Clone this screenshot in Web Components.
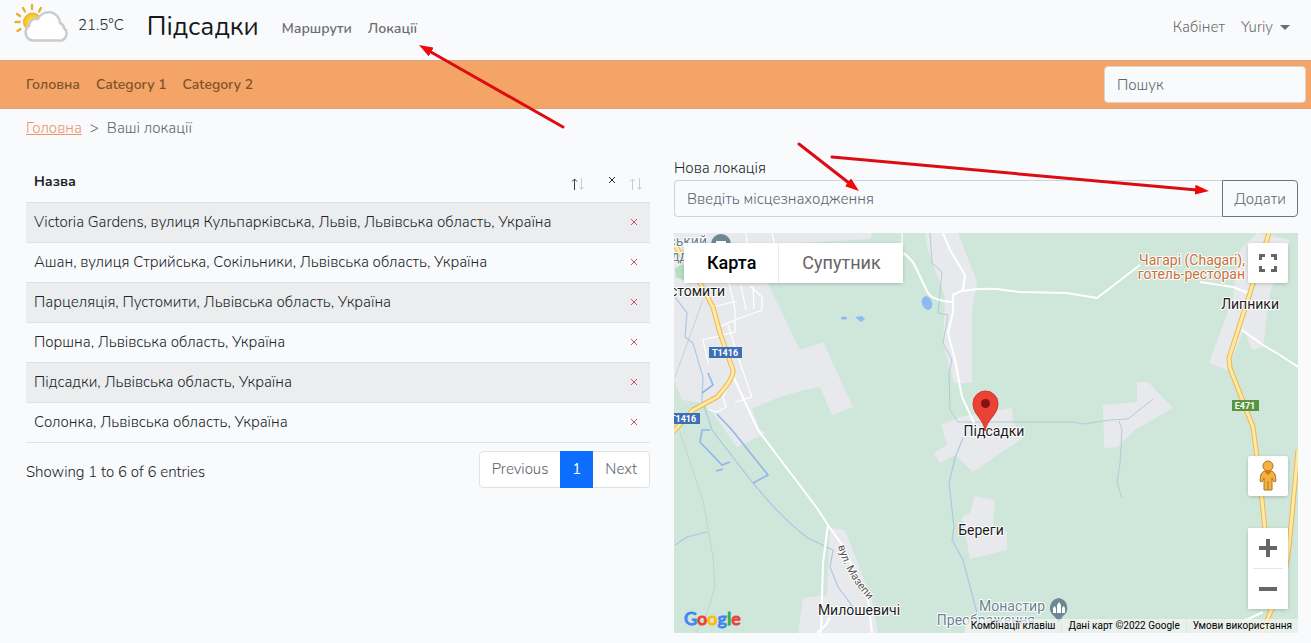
<!DOCTYPE html>
<html lang="uk">
<head>
<meta charset="utf-8">
<meta name="viewport" content="width=device-width, initial-scale=1">
<title>Підсадки – Ваші локації</title>
<style>
  body {
    margin: 0;
    background: #f8fafc;
    color: #212529;
    font: 300 15px/22px Nunito, "Open Sans", "Noto Sans", sans-serif;
    --muted: #6c6d6f;
    --accent: #f4a466;
    --line: #dee2e6;
  }
</style>
</head>
<body>
<locations-page></locations-page>

<script>
const define = (name, html, setup) => {
  const template = document.createElement('template');
  template.innerHTML = html;
  customElements.define(name, class extends HTMLElement {
    constructor() {
      super();
      this.attachShadow({ mode: 'open' }).append(template.content.cloneNode(true));
    }
    connectedCallback() {
      if (setup && !this.ready) { this.ready = true; setup(this, this.shadowRoot); }
    }
  });
};

define('weather-badge', `
<style>
  :host { display: flex; align-items: center; gap: 8px; }
  svg { display: block; }
  span { padding-top: 2px; }
</style>
<svg width="58" height="42" viewBox="0 0 58 42" aria-hidden="true">
  <defs>
    <radialGradient id="sun"><stop offset="0" stop-color="#fff04a"/><stop offset="1" stop-color="#f5bd20"/></radialGradient>
  </defs>
  <g stroke="#e9ae35" stroke-width="2.4" stroke-linecap="round">
    <path d="M20 2v4M11 5l2 3.500M29 5l-2 3.500M5 11l3 2M3.500 19h4M5.500 28l3-2M34 10.500l-2 1.500"/>
  </g>
  <circle cx="20.500" cy="19" r="9" fill="url(#sun)" stroke="#e9ae35"/>
  <path d="M21 37.500a8 8 0 0 1-4-14.500 7 7 0 0 1 9-7 11.500 11.500 0 0 1 22 4 6 6 0 0 1 4 5 7.500 7.500 0 0 1-2 12.500z" fill="#fff" stroke="#cbcccd" stroke-width="2.500"/>
</svg>
<span><slot></slot></span>`);

define('nav-item', `
<style>
  :host { display: block; }
  a { color: inherit; text-decoration: none; display: flex; align-items: center; gap: 7px; }
  i { display: none; border: 5px solid transparent; border-top-color: currentColor; border-bottom: 0; }
  :host([menu]) i { display: block; }
</style>
<a href="#"><slot></slot><i></i></a>`);

define('site-header', `
<style>
  :host { display: flex; align-items: center; height: 60px; padding: 0 21px 0 12px; box-sizing: border-box; }
  weather-badge { align-self: flex-start; padding-top: 3px; }
  .brand { margin-left: 23px; font-size: 26px; line-height: 40px; font-weight: 400; color: #17191b; text-decoration: none; padding-bottom: 6px; }
  nav { display: flex; gap: 16px; color: var(--muted); padding-bottom: 4px; }
  .main { flex: 1; margin-left: 23px; font-size: 14px; font-weight: 600; padding-bottom: 2px; }
  .user { padding-bottom: 6px; }
</style>
<weather-badge>21.5°C</weather-badge>
<a class="brand" href="#">Підсадки</a>
<nav class="main"><nav-item>Маршрути</nav-item><nav-item>Локації</nav-item></nav>
<nav class="user"><nav-item>Кабінет</nav-item><nav-item menu>Yuriy</nav-item></nav>`);

define('category-bar', `
<style>
  :host { display: flex; align-items: center; justify-content: space-between; height: 49px; box-sizing: border-box; padding: 0 5px 0 26px; background: var(--accent); border: solid #d5a582; border-width: 1px 0; }
  nav { display: flex; gap: 16px; font-size: 14px; font-weight: 600; color: #7f532b; }
  input { width: 202px; height: 37px; box-sizing: border-box; padding: 0 12px; font: inherit; background: #f8fafc; border: 1px solid #dcd3cc; border-radius: 4px; }
  input::placeholder { color: #5d666e; }
</style>
<nav><nav-item>Головна</nav-item><nav-item>Category 1</nav-item><nav-item>Category 2</nav-item></nav>
<input type="search" placeholder="Пошук" aria-label="Пошук">`);

define('crumb-trail', `
<style>
  :host { display: flex; gap: 8px; padding: 8px 26px 7px; color: #5d666e; }
  a { color: #ee9468; }
</style>
<a href="#">Головна</a><span>&gt;</span><span><slot></slot></span>`);

define('sort-arrows', `
<style>
  :host { display: block; color: #c9cbcd; }
  svg { display: block; fill: none; stroke: currentColor; }
  :host([active]) .up { stroke: #3b3e41; }
</style>
<svg width="14" height="14" viewBox="0 0 14 14" aria-hidden="true">
  <path class="up" d="M4.500 13V2M2 4.500L4.500 2 7 4.500"/><path d="M11.500 1v11M9.500 10l2 2.500 2-2.500"/>
</svg>`);

define('location-table', `
<style>
  :host { display: block; }
  table { width: 100%; border-collapse: collapse; table-layout: fixed; }
  col:last-child { width: 58px; }
  th, td { box-sizing: border-box; height: 40px; padding: 0 8px; text-align: left; border-bottom: 1px solid var(--line); }
  th { height: 42px; padding-top: 2px; font-size: 14px; font-weight: 700; }
  th div { display: flex; justify-content: space-between; align-items: center; }
  th sort-arrows { padding-top: 4px; }
  th:last-child span { padding-left: 8px; }
  tbody tr:nth-child(odd) { background: #ebedee; }
  td:last-child { text-align: right; }
  button { width: 16px; height: 22px; padding: 0; border: 0; background: none; color: #c8565c; vertical-align: middle; }
  svg { display: inline-block; stroke: currentColor; fill: none; vertical-align: middle; margin-bottom: 4px; }
</style>
<table>
  <colgroup><col><col></colgroup>
  <thead><tr>
    <th><div>Назва<sort-arrows active></sort-arrows></div></th>
    <th><div><span><svg width="8" height="8" viewBox="0 0 8 8"><path d="M1 1l6 6M7 1L1 7"/></svg></span><sort-arrows></sort-arrows></div></th>
  </tr></thead>
  <tbody></tbody>
</table>`, (host, root) => {
  const names = [
    'Victoria Gardens, вулиця Кульпарківська, Львів, Львівська область, Україна',
    'Ашан, вулиця Стрийська, Сокільники, Львівська область, Україна',
    'Парцеляція, Пустомити, Львівська область, Україна',
    'Поршна, Львівська область, Україна',
    'Підсадки, Львівська область, Україна',
    'Солонка, Львівська область, Україна'
  ];
  root.querySelector('tbody').innerHTML = names.map(name => `<tr><td>${name}</td><td><button aria-label="Видалити"><svg width="8" height="8" viewBox="0 0 8 8"><path d="M1 1l6 6M7 1L1 7"/></svg></button></td></tr>`).join('');
});

define('table-pager', `
<style>
  :host { display: flex; justify-content: space-between; align-items: center; padding-top: 8px; }
  nav { display: flex; height: 37px; box-sizing: border-box; border: 1px solid var(--line); border-radius: 4px; background: #fff; }
  button { font: inherit; color: #5d666e; border: 0; background: none; padding: 0 12px; }
  .current { background: #0d6efd; color: #fff; font-weight: 400; margin: -1px 0; }
  p { margin: 0; padding-top: 6px; }
</style>
<p>Showing 1 to 6 of 6 entries</p>
<nav aria-label="Сторінки"><button>Previous</button><button class="current">1</button><button>Next</button></nav>`);

define('location-form', `
<style>
  :host { display: block; }
  form { display: flex; flex-wrap: wrap; }
  label { flex: 0 0 100%; line-height: 24px; }
  input, button { height: 37px; box-sizing: border-box; font: inherit; background: none; }
  input { flex: 1; min-width: 0; padding: 0 12px; border: 1px solid #ced4da; border-right: 0; border-radius: 4px 0 0 4px; }
  input::placeholder { color: #5d666e; }
  button { width: 76px; padding: 0; color: #5d666e; border: 1px solid #6c757d; border-radius: 0 4px 4px 0; }
</style>
<form>
  <label for="place">Нова локація</label>
  <input id="place" placeholder="Введіть місцезнаходження"><button type="button">Додати</button>
</form>`);

define('map-terrain', `
<style>
  :host { display: block; height: 100%; }
  svg { display: block; width: 100%; height: 100%; font: 14px Roboto, sans-serif; }
  .land { fill: #e8e9ed; }
  .water { fill: none; stroke: #a9c9e6; stroke-width: 1.200; }
  .faint { stroke: #b0cbdc; stroke-width: 1; }
  .canal { fill: none; stroke: #90b5ec; stroke-width: 1.600; }
  .pond { fill: #90b8f4; }
  .rail { fill: none; stroke: #c8d2cf; }
  .street { fill: none; stroke: #fff; stroke-width: 1.200; }
  .road { fill: none; stroke: #fff; stroke-width: 2; stroke-linejoin: round; }
  .case { fill: none; stroke: #eeb752; stroke-width: 5; stroke-linejoin: round; }
  .core { fill: none; stroke: #fdeaa5; stroke-width: 3; stroke-linejoin: round; }
  .label { fill: #1c1c1c; stroke: #fff; stroke-width: 2; stroke-linejoin: round; paint-order: stroke; }
  .place { fill: #6b8290; }
  .food { fill: #c7703a; }
  .shield { fill: #fff; font-size: 9px; font-weight: 700; }
  .mid { text-anchor: middle; }
  .end { text-anchor: end; }
</style>
<svg viewBox="0 0 624 400" preserveAspectRatio="xMidYMid slice" role="img" aria-label="Карта околиць села Підсадки">
  <defs><path id="mazepy" d="M164 313Q171 341 194 366"/></defs>
  <rect x="-400" width="1424" height="400" fill="#cfe6da"/>
  <g class="land">
    <path d="M0 0H198L196 6 88 12 93 49 126 117 149 109 179 174 158 182 146 154Q110 160 78 176L86 197 92 200 63 214 40 182 29 170 8 167 0 147z"/>
    <path d="M251 0H284L303 49 298 77V150H280L269 110 271 64 254 17z"/>
    <path d="M267 192L286 184 338 175 339 189 349 205 299 239 281 222 266 230 260 220 273 212z"/>
    <path d="M463 149H474L499 175 461 197 443 214 430 215 429 172 463 169z"/>
    <path d="M301 263L321 267 319 292 333 299V317L296 326 288 284 296 280z"/>
    <path d="M583 0L616 7 596 60 589 114 578 117 570 97 553 137 535 130 546 100 559 64 566 17z"/>
    <path d="M156 295L171 297 198 367 204 400H124L129 365 153 362z"/>
  </g>
  <path d="M1 36L8 30 16 40 12 48 2 44z" fill="#b5dfc0"/>
  <path class="rail" d="M29 67L1 144M6 200L29 267 39 324 41 354 33 380 22 400"/>
  <path class="water" d="M1 64L13 80 11 104 19 110 29 144 28 167 38 197 79 250 96 270Q122 297 134 305L159 317 156 334 164 354 179 374M1 312L13 304 33 299"/>
  <path class="water faint" d="M256 0L258 30 268 39 264 80 274 82 269 110 278 127 275 140 276 177 284 189H326L339 189H400L409 191 436 187 454 186 479 166M445 188L448 197 446 230 443 250 448 265"/>
  <path class="water" d="M289 205L281 225 275 250 280 294 278 307 289 327 303 380"/>
  <path class="canal" d="M43 181L58 197 94 242 79 250M36 197H28L26 209 48 232 56 229M34 140L39 152 28 160M42 238L49 236"/>
  <g class="pond"><ellipse cx="253" cy="70" rx="5" ry="7" transform="rotate(-20 253 70)"/><ellipse cx="170" cy="85" rx="3" ry="1.500"/><path d="M181 84l7-1 3 3-4 3z"/></g>
  <path class="street" d="M39 74L63 68M55 50L61 76 61 87 88 77 88 64 76 53M72 0L74 14M98 0L101 14M67 53L72 77M79 53L80 76M45 94L61 87 61 99 29 107 34 130M54 92L66 130 78 164 61 169M58 146L49 164 52 174 43 179 34 176M228 0V10M233 23L224 18"/>
  <path class="road" d="M59 143L84 197 143 275 154 292 168 312 194 367 198 400M154 292L149 330 147 400M156 384L152 392 143 400"/>
  <path class="road" d="M269 0L276 17 291 42 289 57 279 62 279 79 274 100 281 127 288 164 300 190M230 20L239 29 254 60Q260 68 279 69M289 58Q305 55 323 56L346 59 393 60 423 65 466 32M526 49L559 54 574 60M568 97L589 112 606 122 624 134M568 389L589 379"/>
  <g>
    <path class="case" d="M-2 8L26 50 39 74 46 100 59 137Q60 146 43 164L19 177 -1 199"/>
    <path class="core" d="M-2 8L26 50 39 74 46 100 59 137Q60 146 43 164L19 177 -1 199"/>
    <path class="case" d="M595 0L576 60 555 125 556 135 579 194 586 247 591 297 596 377M624 217L615 314 608 357 596 380 588 400"/>
    <path class="core" d="M595 0L576 60 555 125 556 135 579 194 586 247 591 297 596 377M624 217L615 314 608 357 596 380 588 400"/>
  </g>
  <rect x="35" y="114" width="33" height="11" fill="#3c6fb4"/><rect x="-4" y="180" width="30" height="11" fill="#3c6fb4"/>
  <rect x="558" y="167" width="27" height="11" fill="#5b9440"/>
  <g class="shield mid"><text x="51" y="123">T1416</text><text x="9" y="189">T1416</text><text x="571" y="176">E471</text></g>
  <circle cx="47" cy="11" r="10" fill="#6f8793"/><path d="M42 8h10v4H42z" fill="#fff"/>
  <g class="label">
    <g class="place">
      <text class="end" x="33" y="13">ський</text><text class="end" x="14" y="28">підд</text>
      <text class="end" x="371" y="378">Монастир</text><text class="end" x="361" y="392">Преображення</text>
    </g>
    <g class="food end"><text x="571" y="32">Чагарі (Chagari),</text><text x="571" y="46">готель-ресторан</text></g>
    <text class="end" x="51" y="63">Пустомити</text>
    <text class="end" x="605" y="76">Липники</text>
    <text class="mid" x="307" y="302">Береги</text>
    <text class="mid" x="185" y="382">Милошевичі</text>
    <text font-size="11" fill="#555"><textPath href="#mazepy">вул. Мазепи</textPath></text>
  </g>
  <path d="M385 365a10 10 0 0 1 4 18l-4 6-5-6a10 10 0 0 1 5-18z" fill="#6f8793"/>
  <path d="M379 380v-5l1.500-2 1.500 2v5zM383 380v-8l2-3 2 3v8zM388 380v-5l1.500-2 1.500 2v5z" fill="#fff"/>
  <text class="label mid" x="320" y="203">Підсадки</text>
  <path d="M311 198C310 186 299 182 299 170.500a12.500 12.500 0 0 1 25 0C324 182 313 186 311 198z" fill="#ea4335" stroke="#d33428"/>
  <circle cx="311.500" cy="170.500" r="4.500" fill="#811411"/>
</svg>`);

define('map-logo', `
<style>
  :host { display: block; font: 500 18px/22px Lato, sans-serif; -webkit-text-stroke: 1px currentColor; text-shadow: 0 0 1px #fff; }
  .b { color: #4285f4; } .r { color: #ea4335; } .y { color: #fbbc04; } .g { color: #34a853; }
</style>
<span class="b">G</span><span class="r">o</span><span class="y">o</span><span class="b">g</span><span class="g">l</span><span class="r">e</span>`);

define('location-map', `
<style>
  :host { display: block; position: relative; height: 400px; overflow: hidden; font-family: Roboto, sans-serif; font-weight: 400; }
  .types, .tools, .full, .legal, map-logo { position: absolute; }
  .types { left: 10px; top: 10px; display: flex; }
  button { display: grid; place-items: center; width: 40px; height: 40px; padding: 0; border: 0; background: #fff; font: inherit; color: #666; }
  .types, .full, .man, .zoom { background: #fff; border-radius: 2px; box-shadow: 0 1px 4px -1px rgba(0,0,0,.3); }
  .types button { width: auto; padding: 0 22px 0 23px; font-size: 18px; }
  .types button:first-child { color: #000; font-weight: 500; border-right: 1px solid #ebebeb; }
  .full { right: 10px; top: 10px; }
  .tools { right: 10px; bottom: 24px; display: grid; gap: 32px; }
  .zoom hr { margin: 0 5px; border: 0; height: 1px; background: #e6e6e6; }
  .legal { right: 0; bottom: 0; display: flex; height: 14px; font-size: 10px; line-height: 14px; }
  .legal a { color: #000; text-decoration: none; padding: 0 6px; background: rgba(245,245,245,.7); }
  .legal a + a { border-left: 1px solid rgba(220,225,225,.7); }
  map-logo { left: 10px; bottom: 4px; }
  svg { display: block; }
</style>
<map-terrain></map-terrain>
<div class="types"><button>Карта</button><button>Супутник</button></div>
<button class="full" aria-label="На весь екран"><svg width="18" height="18" fill="none" stroke="#666" stroke-width="3"><path d="M1.500 6V1.500H6M12 1.500h4.500V6M16.500 12v4.500H12M6 16.500H1.500V12"/></svg></button>
<div class="tools">
  <button class="man" aria-label="Перегляд вулиць"><svg width="18" height="32" viewBox="0 0 18 32"><path d="M5 11h8l3 3 1 7-2 1-2-4v12H5V18l-2 4-2-1 1-7z" fill="#f5b13d" stroke="#a97722"/><path d="M9 21v9" stroke="#a97722"/><circle cx="9" cy="6" r="5" fill="#f5b13d" stroke="#a97722"/><path d="M5 11l4 4 4-4z" fill="#d6751e"/></svg></button>
  <div class="zoom">
    <button aria-label="Збільшити"><svg width="18" height="18" fill="#666"><path d="M7 0h4v7h7v4h-7v7H7v-7H0V7h7z"/></svg></button><hr>
    <button aria-label="Зменшити"><svg width="18" height="18" fill="#666"><path d="M0 7h18v4H0z"/></svg></button>
  </div>
</div>
<map-logo></map-logo>
<div class="legal"><a href="#">Комбінації клавіш</a><a href="#">Дані карт ©2022 Google</a><a href="#">Умови використання</a></div>`);

define('note-arrows', `
<style>
  :host { position: absolute; inset: 0; pointer-events: none; overflow: hidden; }
  svg { display: block; width: 100%; height: 100%; }
</style>
<svg aria-hidden="true">
  <defs><marker id="tip" viewBox="0 0 14 10" markerWidth="14" markerHeight="10" refX="14" refY="5" orient="auto" markerUnits="userSpaceOnUse"><path d="M0 0L14 5 0 10z" fill="#f00808"/></marker></defs>
  <g stroke="#dc0d12" stroke-width="3" stroke-linecap="round">
    <path d="M563 127L430 51.500M799 144L849 183M832 157L1197 190"/>
  </g>
  <g fill="none" marker-end="url(#tip)"><path d="M563 127L419 45"/><path d="M799 144L859 191"/><path d="M832 157L1209 191"/></g>
</svg>`);

define('locations-page', `
<style>
  :host { display: block; position: relative; padding-bottom: 10px; }
  main { display: grid; grid-template-columns: 1fr 1fr; gap: 24px; padding: 10px 13px 0 26px; }
  section { min-width: 0; }
  location-table { padding-top: 4px; }
  .place { display: grid; gap: 16px; align-content: start; }
</style>
<site-header></site-header>
<category-bar></category-bar>
<crumb-trail>Ваші локації</crumb-trail>
<main>
  <section><location-table></location-table><table-pager></table-pager></section>
  <section class="place"><location-form></location-form><location-map></location-map></section>
</main>
<note-arrows></note-arrows>`);
</script>
</body>
</html>
